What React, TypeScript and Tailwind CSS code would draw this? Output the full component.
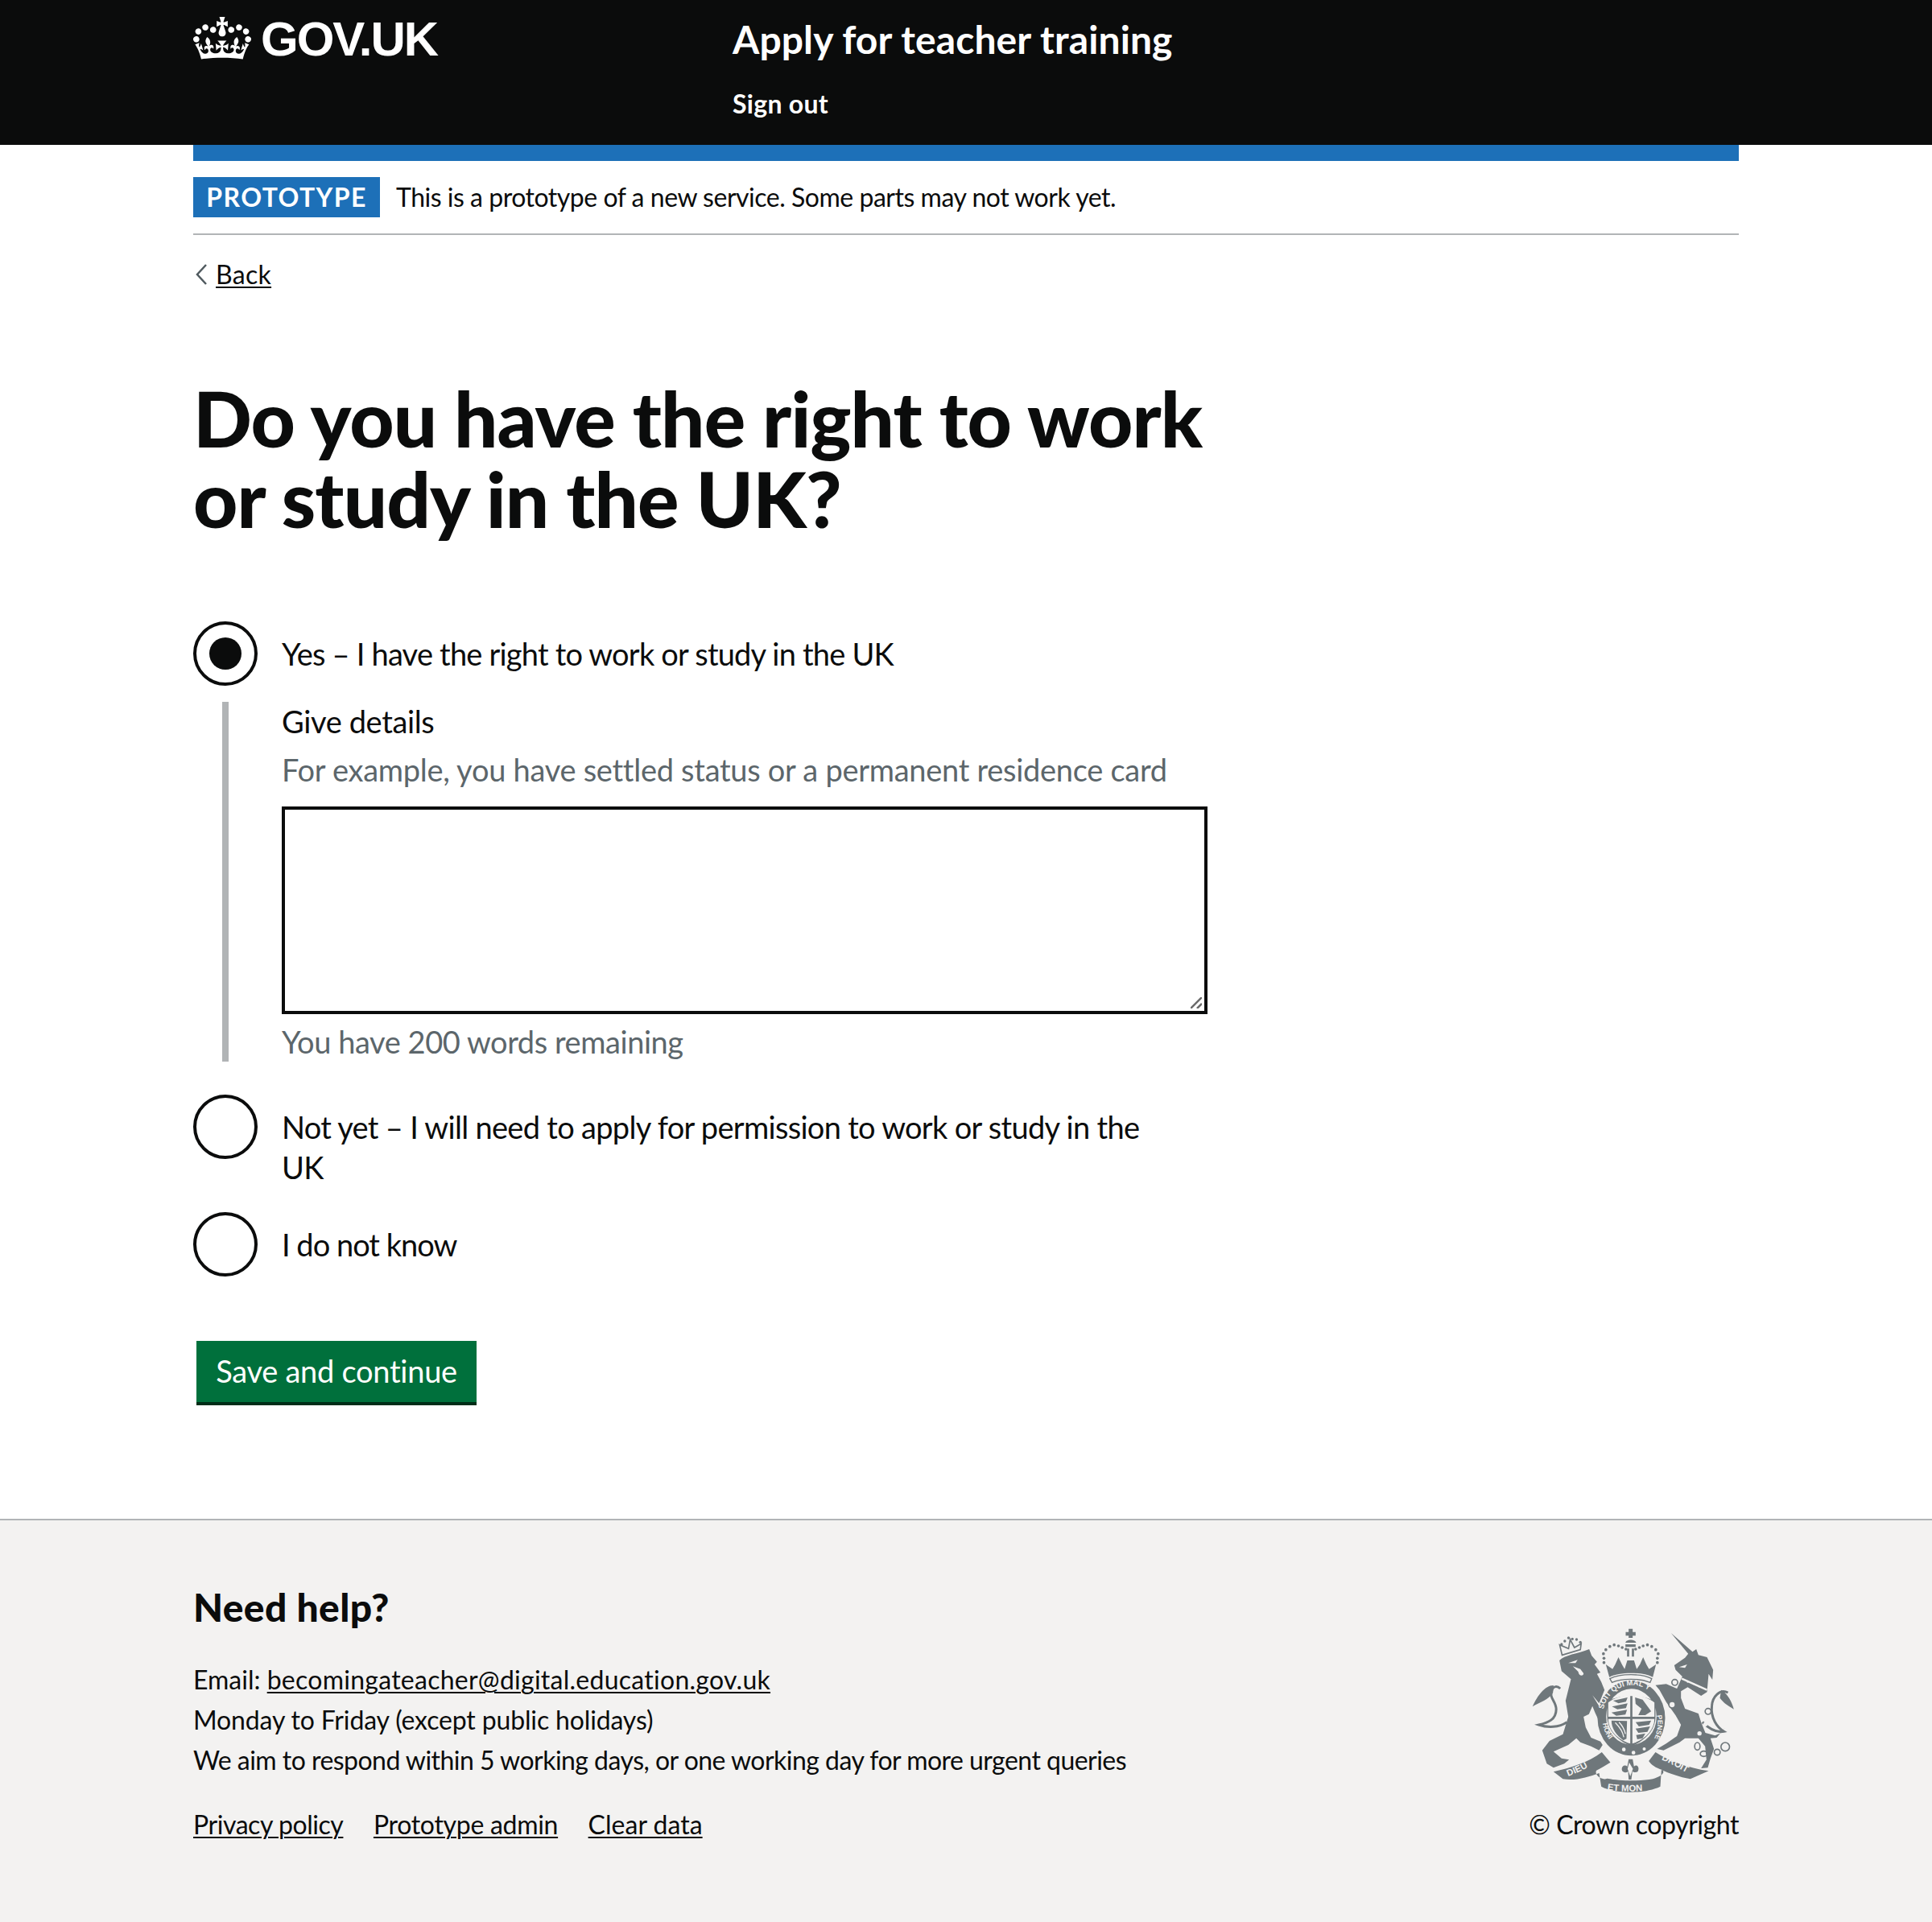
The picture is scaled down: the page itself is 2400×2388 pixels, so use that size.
import React from "react";

function CrownLogo() {
  return (
    <svg className="w-[72px] h-[53px] shrink-0" viewBox="0 0 132 97" fill="#ffffff">
      <path fillRule="evenodd" d="M25 30.2c3.5 1.5 7.7-.2 9.1-3.7 1.5-3.6-.2-7.8-3.9-9.2-3.6-1.4-7.6.3-9.1 3.9-1.4 3.5.3 7.5 3.9 9zM9 39.5c3.6 1.5 7.8-.2 9.2-3.7 1.5-3.6-.2-7.8-3.9-9.1-3.6-1.5-7.6.2-9.1 3.8-1.4 3.5.3 7.5 3.8 9zM4.4 57.2c3.5 1.5 7.7-.2 9.1-3.8 1.5-3.6-.2-7.7-3.9-9.1-3.5-1.5-7.6.3-9.1 3.8-1.4 3.5.3 7.6 3.9 9.1zm38.3-21.4c3.5 1.5 7.7-.2 9.1-3.8 1.5-3.6-.2-7.7-3.9-9.1-3.6-1.5-7.6.3-9.1 3.8-1.3 3.6.4 7.7 3.9 9.1zm64.4-5.6c-3.6 1.5-7.8-.2-9.1-3.7-1.5-3.6.2-7.8 3.8-9.2 3.6-1.4 7.7.3 9.2 3.9 1.3 3.5-.4 7.5-3.9 9zm15.9 9.3c-3.6 1.5-7.7-.2-9.1-3.7-1.5-3.6.2-7.8 3.7-9.1 3.6-1.5 7.7.2 9.2 3.8 1.5 3.5-.3 7.5-3.8 9zm4.7 17.7c-3.6 1.5-7.8-.2-9.2-3.8-1.5-3.6.2-7.7 3.9-9.1 3.6-1.5 7.7.3 9.2 3.8 1.3 3.5-.4 7.6-3.9 9.1zM89.3 35.8c-3.6 1.5-7.8-.2-9.2-3.8-1.4-3.6.2-7.7 3.9-9.1 3.6-1.5 7.7.3 9.2 3.8 1.4 3.6-.3 7.7-3.9 9.1zM69.7 17.7l8.9 4.7V9.3l-8.9 2.8c-.2-.3-.5-.6-.9-.9L72.4 0H59.6l3.6 11.2c-.3.3-.6.5-.9.9l-8.8-2.8v13.1l8.8-4.7c.3.3.6.7.9.9l-5 15.4v.1c-.2.8-.4 1.6-.4 2.4 0 4.1 3.1 7.5 7 8.1h.2c.3 0 .7.1 1 .1.4 0 .7 0 1-.1h.2c4-.6 7.1-4.1 7.1-8.1 0-.8-.1-1.7-.4-2.4V34l-5.1-15.4c.4-.2.7-.6 1-.9zM66 92.8c16.9 0 32.8 1.1 47.1 3.2 4-16.9 8.9-26.7 14-33.5l-9.6-3.4c1 4.9 1.1 7.2 0 10.2-1.5-1.4-3-4.3-4.2-8.7L108.6 76c2.8-2 5-3.2 7.5-3.3-4.4 9.4-10 11.9-13.6 11.2-4.3-.8-6.3-4.6-5.6-7.9 1-4.7 5.7-5.9 8-.5 4.3-8.7-3-11.4-7.6-8.8 7.1-7.2 7.9-13.5 2.1-21.1-8 6.1-8.1 12.3-4.5 20.8-4.7-5.4-12.1-2.5-9.5 6.2 3.4-5.2 7.9-2 7.2 3.1-.6 4.3-6.4 7.8-13.5 7.2-10.3-.9-10.9-8-11.2-13.8 2.5-.5 7.1 1.8 11 7.3L80.2 60c-4.1 4.4-8 5.3-12.3 5.4 1.4-4.4 8-11.6 8-11.6H55.5s6.4 7.2 7.9 11.6c-4.2-.1-8-1-12.3-5.4l1.4 16.4c3.9-5.5 8.5-7.7 10.9-7.3-.3 5.8-.9 12.8-11.1 13.8-7.2.6-12.9-2.9-13.5-7.2-.7-5 3.8-8.3 7.1-3.1 2.7-8.7-4.6-11.6-9.4-6.2 3.7-8.5 3.6-14.7-4.6-20.8-5.8 7.6-5 13.9 2.2 21.1-4.7-2.6-11.9.1-7.7 8.8 2.3-5.5 7.1-4.2 8.1.5.7 3.3-1.3 7.1-5.7 7.9-3.5.7-9-1.8-13.5-11.2 2.5.1 4.7 1.3 7.5 3.3l-4.7-15.4c-1.2 4.4-2.7 7.2-4.3 8.7-1.1-3-.9-5.3 0-10.2l-9.5 3.4c5 6.9 9.9 16.7 14 33.5 14.8-2.1 30.8-3.2 47.7-3.2z" />
    </svg>
  );
}

// rough redraw of the royal coat of arms, coordinates follow the reference crop
function Crest() {
  const g = "#6f777b";
  const bg = "#f3f2f1";
  const crownDots = [
    [338, 182], [336, 165], [345, 150], [360, 138], [376, 132], [392, 136], [406, 142], [420, 148],
    [537, 182], [540, 165], [531, 150], [516, 138], [500, 132], [484, 136], [470, 142], [456, 148],
    [338, 198], [537, 198],
  ];
  const lionCrownDots = [[180, 130], [192, 118], [206, 106], [220, 110], [236, 112], [250, 122]];
  return (
    <svg className="w-[252px] h-[205px]" viewBox="70 70 755 615">
      <defs>
        <path id="garter-top" d="M336 372 A110 112 0 0 1 550 365" />
        <path id="garter-right" d="M535 395 A104 118 0 0 1 488 525" />
        <path id="garter-left" d="M334 425 A118 118 0 0 0 378 505" />
        <path id="scroll-left" d="M205 622 C240 608 280 590 315 565" />
        <path id="scroll-mid" d="M350 672 C390 680 480 680 525 670" />
        <path id="scroll-right" d="M552 560 C590 575 630 600 672 622" />
      </defs>
      {/* lion */}
      <path fill={g} d="M172 190 C190 170 240 165 283 148 L292 172 L312 195 L303 205 L325 235 L312 240 L328 270 L340 300 L320 350 L295 320 L335 385 L345 425 L325 428 L305 385 L295 360 L282 390 L262 400 L270 440 L290 478 L325 492 L333 505 L320 525 L290 510 L250 495 L235 480 L205 505 L150 530 L180 555 L208 560 L190 575 L150 590 L125 575 L108 525 L135 490 L185 465 L205 400 L195 340 L215 260 L180 230 Z" />
      <path fill="none" stroke={g} strokeWidth="9" d="M200 420 C170 440 130 442 95 430 C130 422 160 410 160 372 C160 340 130 330 145 298 C150 285 165 285 175 295" />
      <path fill={g} d="M150 283 C120 282 90 320 72 362 C100 345 132 338 148 310 Z" />
      <path fill={bg} d="M205 200 L240 188 L232 200 Z M222 212 L250 222 L262 238 C262 250 245 250 242 232 Z" />
      <path fill="none" stroke={g} strokeWidth="5" d="M182 170 L173 132 L206 146 L212 112 L228 142 L253 128 L250 150 Z" />
      {lionCrownDots.map(([x, y]) => <circle key={`${x}-${y}`} cx={x} cy={y} r="5" fill={g} />)}
      {/* unicorn */}
      <path fill={g} d="M588 88 L668 158 L682 148 L690 170 L722 178 L745 225 L742 262 L728 240 L722 308 L700 322 L650 290 L625 305 L625 330 L640 370 L690 388 L700 420 L716 460 L752 470 L770 462 L790 440 L758 478 L735 480 L748 520 L735 555 L725 590 L700 592 L720 560 L715 510 L690 480 L640 480 L620 495 L560 525 L536 520 L570 500 L610 472 L625 430 L605 395 L570 345 L545 300 L530 282 L570 278 L610 295 L630 250 L605 225 L600 208 L640 180 L652 165 Z" />
      <path fill="none" stroke={g} strokeWidth="9" d="M705 420 C735 450 760 460 785 455 C760 440 735 405 740 360 C742 325 770 295 800 310" />
      <path fill={g} d="M775 300 C800 315 815 345 822 372 C800 358 785 350 770 330 Z" />
      <path fill="none" stroke={bg} strokeWidth="7" d="M628 258 L722 300" />
      <path fill={bg} d="M618 215 L648 205 L640 218 Z" />
      <g fill={bg} stroke={g} strokeWidth="5">
        <circle cx="602" cy="272" r="11" />
        <circle cx="592" cy="355" r="12" />
        <circle cx="726" cy="380" r="11" />
      </g>
      <g fill={bg}>
        <circle cx="716" cy="428" r="8" />
        <circle cx="694" cy="462" r="8" />
        <circle cx="650" cy="270" r="3" />
        <circle cx="672" cy="278" r="3" />
        <circle cx="694" cy="288" r="3" />
      </g>
      <g fill="none" stroke={g} strokeWidth="5">
        <ellipse cx="686" cy="510" rx="10" ry="14" />
        <ellipse cx="710" cy="538" rx="13" ry="10" />
        <circle cx="760" cy="532" r="11" />
        <circle cx="790" cy="512" r="16" />
      </g>
      {/* royal crown */}
      <g fill={g}>
        {crownDots.map(([x, y]) => <circle key={`${x}-${y}`} cx={x} cy={y} r="5.5" />)}
        <path d="M430 72 H445 V84 H456 V98 H445 V106 H430 V98 H419 V84 H430 Z" />
        <path d="M418 124 C420 110 455 110 458 124 Z" />
        <path d="M424 146 H432 V176 H424 Z M442 146 H450 V176 H442 Z M418 130 H456 V140 H418 Z" />
        <path d="M345 205 L370 222 L380 205 L392 178 L405 205 L415 222 L425 190 H450 L460 222 L472 205 L484 178 L496 205 L506 222 L532 205 L520 252 C480 232 395 232 358 252 Z" />
        <path d="M360 258 C400 238 478 238 516 258 L510 272 C470 256 405 256 368 272 Z" fill={bg} stroke={g} strokeWidth="4" />
      </g>
      {/* garter and shield */}
      <ellipse cx="440" cy="405" rx="126" ry="140" fill={g} />
      <ellipse cx="440" cy="400" rx="94" ry="104" fill={bg} />
      <path d="M350 345 C385 315 490 315 530 345 V400 C530 450 490 490 440 510 C390 490 350 450 350 400 Z" fill={g} />
      <path fill={bg} d="M354 347 C375 328 415 320 436 318 V400 H354 Z M444 318 C465 320 505 328 526 347 V400 H444 Z M354 408 H436 V500 C390 485 354 450 354 408 Z M444 408 H526 C526 450 490 485 444 500 Z" />
      <g fill={g}>
        <path d="M372 340 L426 328 L420 344 L392 350 Z M368 362 L426 350 L420 368 L388 372 Z M366 384 L424 374 L418 392 L384 396 Z" />
        <path d="M454 328 L482 336 L514 380 L492 394 L466 394 L478 370 L456 352 Z" />
        <path d="M456 420 L514 414 L506 430 L468 436 Z M456 444 L510 436 L500 456 L466 460 Z M458 468 L492 462 L482 480 L462 484 Z" />
        <path d="M366 414 L424 416 L422 482 L410 488 C385 468 366 445 366 414 Z" />
      </g>
      <path d="M380 422 C396 438 408 455 412 476 M394 420 C406 432 414 446 418 464" stroke={bg} strokeWidth="4" fill="none" />
      <circle cx="412" cy="522" r="7" fill={bg} />
      <circle cx="448" cy="534" r="7" fill={bg} />
      <circle cx="488" cy="520" r="6" fill={bg} />
      <g fill={bg} fontFamily="'Liberation Sans', sans-serif" fontWeight="700" fontSize="28">
        <text><textPath href="#garter-top">SOIT QUI MAL Y</textPath></text>
        <text fontSize="26"><textPath href="#garter-right">PENSE</textPath></text>
        <text fontSize="26"><textPath href="#garter-left">HONI</textPath></text>
      </g>
      {/* motto scroll */}
      <path fill={g} d="M150 605 C215 590 280 570 330 532 L362 570 C345 580 330 590 310 600 C300 615 330 640 350 630 C400 640 480 640 520 632 C545 625 570 610 555 598 C530 590 515 580 505 565 L530 532 C580 565 650 590 728 602 L660 632 C620 625 580 610 552 598 L548 660 C490 688 380 688 328 660 L320 610 C280 625 230 640 185 632 Z" />
      <path fill={g} fillRule="evenodd" d="M430 558 L445 558 L450 585 C462 575 472 590 464 604 C456 610 448 606 444 604 L440 634 L430 634 L428 604 C420 610 410 608 406 602 C400 590 412 575 425 585 Z M432 570 L426 594 L436 622 L446 594 Z" />
      <g fill={bg} fontFamily="'Liberation Sans', sans-serif" fontWeight="700" fontSize="34">
        <text><textPath href="#scroll-left">DIEU</textPath></text>
        <text><textPath href="#scroll-mid">ET MON</textPath></text>
        <text><textPath href="#scroll-right">DROIT</textPath></text>
      </g>
    </svg>
  );
}

function Radio({ checked, tracking, children }: { checked?: boolean; tracking: string; children: React.ReactNode }) {
  return (
    <label className="flex items-start gap-[30px]">
      <span className="w-[80px] h-[80px] shrink-0 rounded-full border-[4px] border-[#0b0c0c] flex items-center justify-center">
        {checked && <span className="w-[40px] h-[40px] rounded-full bg-[#0b0c0c]" />}
      </span>
      <span className={`pt-[15px] pb-[11px] w-[1085px] text-[38px] leading-[50px] ${tracking}`}>{children}</span>
    </label>
  );
}

export default function App() {
  const link = "underline underline-offset-[3px] decoration-2";
  return (
    <div className="min-h-[2388px] flex flex-col bg-white text-[#0b0c0c] font-['Lato',sans-serif]">
      <header className="h-[180px] bg-[#0b0c0c] text-white">
        <div className="w-[1920px] mx-auto flex">
          <a href="#" className="w-[670px] shrink-0 flex items-start gap-[12px] pt-[21px]">
            <CrownLogo />
            <span className="font-['Liberation_Sans',sans-serif] font-bold text-[60px] leading-[56px] tracking-[-2px]">GOV.UK</span>
          </a>
          <div className="pt-[19px]">
            <div className="font-bold text-[48px] leading-[60px] tracking-[0.1px]">Apply for teacher training</div>
            <a href="#" className="block mt-[30px] font-bold text-[32px] leading-[40px] tracking-[0.3px]">Sign out</a>
          </div>
        </div>
      </header>

      <main className="w-[1920px] mx-auto">
        <div className="h-[20px] bg-[#1d70b8]" />
        <div className="flex items-center gap-[20px] py-[20px] border-b-2 border-[#b1b4b6] h-[92px]">
          <strong className="h-[50px] w-[232px] flex items-center justify-center bg-[#1d70b8] text-white font-bold text-[32px] tracking-[1.4px]">PROTOTYPE</strong>
          <span className="text-[32px] leading-[50px] tracking-[-0.48px]">This is a prototype of a new service. Some parts may not work yet.</span>
        </div>

        <a href="#" className="flex items-center gap-[10px] mt-[24px] h-[50px] w-fit text-[32px] tracking-[0.3px]">
          <svg className="w-[15px] h-[26px] ml-[3px]" viewBox="0 0 15 26" fill="none" stroke="#505a5f" strokeWidth="2.5">
            <path d="M13 1 L2 13 L13 25" />
          </svg>
          <span className={link}>Back</span>
        </a>

        <h1 className="mt-[103px] w-[1280px] font-black text-[96px] leading-[100px] tracking-[-0.9px]">Do you have the right to work or study in the UK?</h1>

        <div className="mt-[103px] flex flex-col">
          <Radio checked tracking="tracking-[-0.8px]">Yes – I have the right to work or study in the UK</Radio>
          <div className="mt-[20px] ml-[36px] border-l-[8px] border-[#b1b4b6] pl-[66px] h-[447px]">
            <div className="text-[38px] leading-[49px] tracking-[-0.38px]">Give details</div>
            <div className="mt-[10px] text-[38px] leading-[50px] tracking-[-0.28px] text-[#5c666b]">For example, you have settled status or a permanent residence card</div>
            <div className="relative mt-[21px] w-[1150px]">
              <textarea className="block w-full h-[258px] border-[4px] border-[#0b0c0c] p-[10px] resize-none" />
              <svg className="absolute right-[7px] bottom-[7px] w-[14px] h-[14px]" viewBox="0 0 14 14" stroke="#6b6b6b" strokeWidth="2.5">
                <path d="M0 14 L14 0 M8 14 L14 8" />
              </svg>
            </div>
            <div className="mt-[9px] text-[38px] leading-[50px] tracking-[-0.44px] text-[#5c666b]">You have 200 words remaining</div>
          </div>
          <div className="mt-[41px]">
            <Radio tracking="tracking-[-0.7px]">Not yet – I will need to apply for permission to work or study in the UK</Radio>
          </div>
          <div className="mt-[20px]">
            <Radio tracking="tracking-[-1px]">I do not know</Radio>
          </div>
        </div>

        <button className="mt-[80px] ml-[4px] w-[348px] h-[80px] pb-[2px] bg-[#00703c] border-b-[4px] border-[#002d18] text-white text-[38px] tracking-[-0.27px]">Save and continue</button>
      </main>

      <footer className="mt-[141px] flex-1 border-t-2 border-[#b1b4b6] bg-[#f3f2f1]">
        <div className="w-[1920px] mx-auto flex justify-between items-end pt-[83px]">
          <div>
            <h2 className="font-black text-[48px] leading-[50px] tracking-[0.37px]">Need help?</h2>
            <div className="mt-[40px] text-[32px] leading-[50px]">
              <div>Email: <a href="#" className={`${link} tracking-[0.26px]`}>becomingateacher@digital.education.gov.uk</a></div>
              <div className="tracking-[-0.15px]">Monday to Friday (except public holidays)</div>
              <div className="tracking-[-0.53px]">We aim to respond within 5 working days, or one working day for more urgent queries</div>
            </div>
            <div className="mt-[30px] flex gap-[37.5px] text-[32px] leading-[50px]">
              <a href="#" className={`${link} tracking-[-0.44px]`}>Privacy policy</a>
              <a href="#" className={`${link} tracking-[-0.3px]`}>Prototype admin</a>
              <a href="#" className={`${link} tracking-[0.01px]`}>Clear data</a>
            </div>
          </div>
          <div className="flex flex-col items-end">
            <div className="mr-[5px]"><Crest /></div>
            <div className="mt-[14px] text-[32px] leading-[50px] tracking-[-0.45px]">© Crown copyright</div>
          </div>
        </div>
      </footer>
    </div>
  );
}
